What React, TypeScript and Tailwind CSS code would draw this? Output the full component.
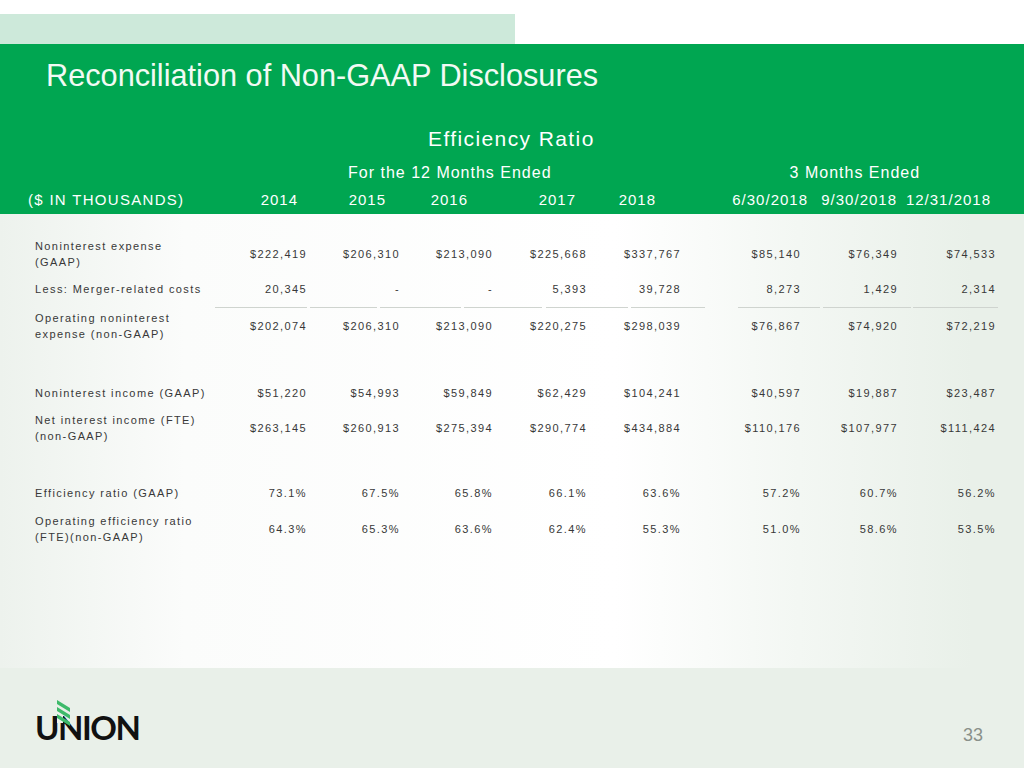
import React from 'react'

const bodyCols = 'grid grid-cols-[180px_92px_93px_93px_94px_94px_120px_97px_98px]'
const headCols = 'grid grid-cols-[212px_58px_88px_82px_108px_80px_152px_89px_94px]'

type Row = { label: React.ReactNode; values: string[]; h: string }

const topRows: Row[] = [
  {
    label: <>Noninterest expense<br />(GAAP)</>,
    values: ['$222,419', '$206,310', '$213,090', '$225,668', '$337,767', '$85,140', '$76,349', '$74,533'],
    h: 'h-[32px]',
  },
  {
    label: 'Less: Merger-related costs',
    values: ['20,345', '-', '-', '5,393', '39,728', '8,273', '1,429', '2,314'],
    h: 'h-[37px]',
  },
]

const opRow: Row = {
  label: <>Operating noninterest<br />expense (non-GAAP)</>,
  values: ['$202,074', '$206,310', '$213,090', '$220,275', '$298,039', '$76,867', '$74,920', '$72,219'],
  h: 'h-[36px]',
}

const incomeRows: Row[] = [
  {
    label: 'Noninterest income (GAAP)',
    values: ['$51,220', '$54,993', '$59,849', '$62,429', '$104,241', '$40,597', '$19,887', '$23,487'],
    h: 'h-[32px]',
  },
  {
    label: <>Net interest income (FTE)<br />(non-GAAP)</>,
    values: ['$263,145', '$260,913', '$275,394', '$290,774', '$434,884', '$110,176', '$107,977', '$111,424'],
    h: 'h-[37px]',
  },
]

const ratioRows: Row[] = [
  {
    label: 'Efficiency ratio (GAAP)',
    values: ['73.1%', '67.5%', '65.8%', '66.1%', '63.6%', '57.2%', '60.7%', '56.2%'],
    h: 'h-[32px]',
  },
  {
    label: <>Operating efficiency ratio<br />(FTE)(non-GAAP)</>,
    values: ['64.3%', '65.3%', '63.6%', '62.4%', '55.3%', '51.0%', '58.6%', '53.5%'],
    h: 'h-[39px]',
  },
]

const headers = ['2014', '2015', '2016', '2017', '2018', '6/30/2018', '9/30/2018', '12/31/2018']

// separator segments under the first block: [left, width]
const segments: [number, number][] = [
  [215, 92], [310, 67], [380, 81], [464, 78], [546, 82], [631, 74], [738, 82], [823, 88], [913, 85],
]

function DataRow({ row }: { row: Row }) {
  return (
    <div className={`${bodyCols} ${row.h} items-center`}>
      <div className="whitespace-nowrap leading-[16px]">{row.label}</div>
      {row.values.map((v, i) => (
        <div key={i} className="text-right leading-[16px]">{v}</div>
      ))}
    </div>
  )
}

function Logo() {
  return (
    <div className="relative">
      <span className="block text-[33px] leading-[34px] font-bold tracking-[-1.5px] text-[#111]" style={{ fontFamily: 'Lato, "Liberation Sans", sans-serif' }}>
        UNION
      </span>
      <svg className="absolute left-[22px] top-[-11px]" width="16" height="27" viewBox="0 0 16 27">
        <rect x="0" y="12" width="6" height="12" fill="#edf2ed" />
        {[0, 1, 2].map((k) => (
          <polygon key={k} points={`0,${1 + 7 * k} 0,${5 + 7 * k} 13,${13 + 7 * k} 13,${9 + 7 * k}`} fill="#3dba6a" />
        ))}
      </svg>
    </div>
  )
}

export default function App() {
  return (
    <div className="w-[1024px] h-[768px] overflow-hidden bg-white flex flex-col" style={{ fontFamily: '"Liberation Sans", Arial, sans-serif' }}>
      {/* top band */}
      <div className="h-[44px] pt-[14px]">
        <div className="w-[515px] h-[30px] bg-[#cde9da]" />
      </div>

      {/* green header */}
      <div className="h-[170px] bg-[#00a651] pt-[14px] text-white">
        <h1 className="pl-[46px] text-[30.7px] leading-[36px] text-[#f2faf4]">Reconciliation of Non-GAAP Disclosures</h1>
        <div className="mt-[33px] pl-[428px] text-[21px] leading-[24px] tracking-[1.4px]">Efficiency Ratio</div>
        <div className="mt-[12px] flex text-[16px] leading-[20px] tracking-[1px]">
          <span className="ml-[348px]">For the 12 Months Ended</span>
          <span className="ml-[238px]">3 Months Ended</span>
        </div>
        <div className={`${headCols} mt-[7px] pl-[28px] text-[15px] leading-[20px] tracking-[1px]`}>
          <div className="tracking-[1.3px]">($ IN THOUSANDS)</div>
          {headers.map((h) => (
            <div key={h} className="text-right">{h}</div>
          ))}
        </div>
      </div>

      {/* table body */}
      <div className="h-[454px] bg-[linear-gradient(to_right,#edf2ed_0%,#fbfcfb_18%,#ffffff_60%,#f3f7f3_78%,#e9f0e9_95%)] pt-[24px] pl-[35px] text-[11px] tracking-[1.4px] text-[#383838]">
        {topRows.map((r, i) => (
          <DataRow key={i} row={r} />
        ))}
        <div className="relative h-px">
          {segments.map(([l, w]) => (
            <div key={l} className="absolute top-0 h-px bg-[#cfd4cf]" style={{ left: l - 35, width: w }} />
          ))}
        </div>
        <DataRow row={opRow} />
        <div className="h-[33px]" />
        {incomeRows.map((r, i) => (
          <DataRow key={i} row={r} />
        ))}
        <div className="h-[31px]" />
        {ratioRows.map((r, i) => (
          <DataRow key={i} row={r} />
        ))}
      </div>

      {/* footer */}
      <div className="flex-1 bg-[#e9f0e9] flex justify-between">
        <div className="mt-[42px] ml-[35px]">
          <Logo />
        </div>
        <div className="mt-[57px] mr-[41px] text-[18px] leading-[20px] text-[#8a908a]">33</div>
      </div>
    </div>
  )
}
